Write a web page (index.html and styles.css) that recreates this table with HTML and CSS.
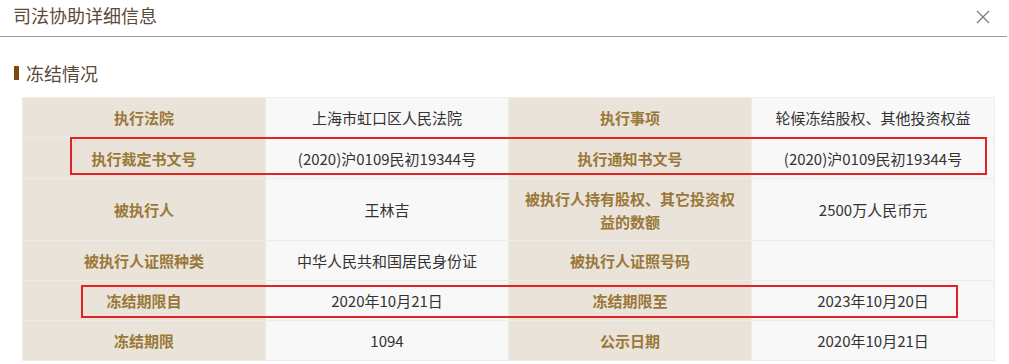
FILE: index.html
```html
<!DOCTYPE html>
<html lang="zh-CN">
<head>
<meta charset="utf-8">
<link rel="stylesheet" href="styles.css">
</head>
<body>
<div class="dialog">
  <div class="dialog-header">
    <span class="dialog-title">司法协助详细信息</span>
    <svg class="close" width="14" height="14" viewBox="0 0 14 14"><path d="M1 1L13 13M13 1L1 13" stroke="#7a7a7a" stroke-width="1.2" fill="none"/></svg>
  </div>
  <div class="section-title"><span class="bar"></span>冻结情况</div>
  <div class="table-wrap">
    <table class="info">
      <colgroup><col class="c"><col class="c"><col class="c"><col class="c"></colgroup>
      <tr class="r40">
        <th>执行法院</th><td>上海市虹口区人民法院</td>
        <th>执行事项</th><td>轮候冻结股权、其他投资权益</td>
      </tr>
      <tr class="r41">
        <th>执行裁定书文号</th><td>(2020)沪0109民初19344号</td>
        <th>执行通知书文号</th><td>(2020)沪0109民初19344号</td>
      </tr>
      <tr class="r62">
        <th>被执行人</th><td>王林吉</td>
        <th class="wrap">被执行人持有股权、其它投资权益的数额</th><td>2500万人民币元</td>
      </tr>
      <tr class="r40">
        <th>被执行人证照种类</th><td>中华人民共和国居民身份证</td>
        <th>被执行人证照号码</th><td></td>
      </tr>
      <tr class="r40">
        <th>冻结期限自</th><td>2020年10月21日</td>
        <th>冻结期限至</th><td>2023年10月20日</td>
      </tr>
      <tr class="r40">
        <th>冻结期限</th><td>1094</td>
        <th>公示日期</th><td>2020年10月21日</td>
      </tr>
    </table>
    <div class="mark mark-1"></div>
    <div class="mark mark-2"></div>
  </div>
</div>
</body>
</html>
```

FILE: styles.css
```css
html, body {
  margin: 0;
  padding: 0;
  background: #fff;
  font-family: "Noto Sans CJK SC", "Noto Sans", sans-serif;
}
.dialog {
  width: 1009px;
}
.dialog-header {
  height: 37px;
  border-bottom: 1px solid #9a9a9a;
  display: flex;
  align-items: center;
  justify-content: space-between;
  padding: 0 17px 0 13px;
  box-sizing: border-box;
  width: 1007px;
}
.dialog-title {
  font-size: 18px;
  color: #5c4a38;
  margin-top: -6px;
}
.close {
  margin-top: -2px;
}
.section-title {
  display: flex;
  align-items: center;
  margin: 20px 0 0 14px;
  height: 32px;
  font-size: 18px;
  color: #5c4a38;
}
.bar {
  width: 5px;
  height: 14px;
  background: #7b4a12;
  margin-right: 7px;
}
.table-wrap {
  position: relative;
  margin: 8px 0 0 22px;
  width: 972px;
}
.info {
  border-collapse: collapse;
  width: 972px;
  table-layout: fixed;
  font-size: 15px;
}
.info col.c {
  width: 243px;
}
.info th, .info td {
  text-align: center;
  padding: 0 8px;
  border: 1px solid #efebe6;
}
.info th {
  background: #e9e3da;
  color: #9a7838;
  font-weight: bold;
}
.info td {
  background: #f8f8f8;
  color: #333;
}
.info th.wrap {
  line-height: 23px;
  padding: 0 14px;
}
.r40 { height: 40px; }
.r41 { height: 41px; }
.r62 { height: 62px; }
.mark {
  position: absolute;
  border: 2px solid #e02424;
  box-sizing: border-box;
}
.mark-1 {
  left: 48px;
  top: 40px;
  width: 917px;
  height: 38px;
}
.mark-2 {
  left: 59px;
  top: 188px;
  width: 877px;
  height: 33px;
}
```
